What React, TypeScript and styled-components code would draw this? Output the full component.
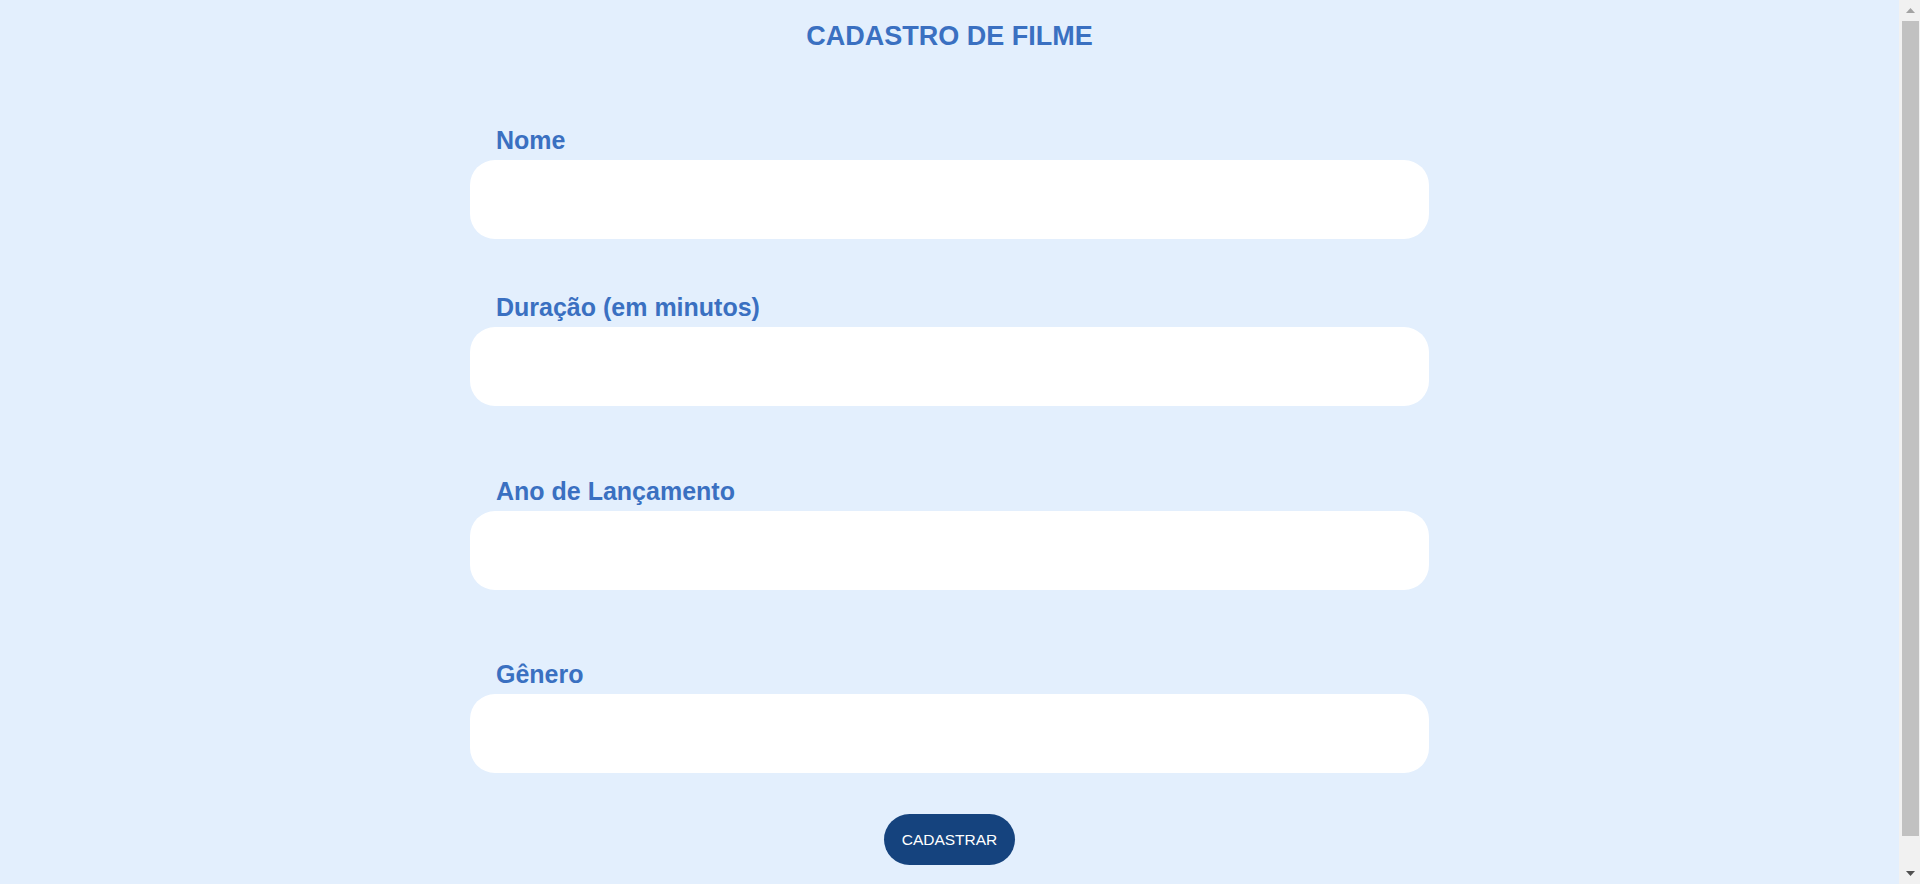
import React from "react";
import styled, { createGlobalStyle } from "styled-components";

const Global = createGlobalStyle`
  html, body {
    margin: 0;
    padding: 0;
    background: #e3effd;
    font-family: "Liberation Sans", Arial, sans-serif;
  }
`;

const Page = styled.main`
  display: flex;
  flex-direction: column;
  align-items: center;
  padding: 21px 21px 51px 0;
`;

const Title = styled.h1`
  margin: 0 0 75px;
  font-size: 27px;
  line-height: 30px;
  font-weight: 700;
  color: #3a70c1;
  text-align: center;
`;

const Form = styled.form`
  display: flex;
  flex-direction: column;
  align-items: center;
  width: 959px;
`;

const Field = styled.div<{ $gap: number }>`
  display: flex;
  flex-direction: column;
  width: 100%;
  margin-bottom: ${(p) => p.$gap}px;
`;

const Label = styled.label`
  display: block;
  padding-left: 26px;
  margin-bottom: 6px;
  font-size: 25px;
  line-height: 28px;
  font-weight: 700;
  color: #3a70c1;
`;

const Input = styled.input`
  box-sizing: border-box;
  width: 100%;
  height: 79px;
  border: none;
  outline: none;
  border-radius: 25px;
  background: #ffffff;
  padding: 0 26px;
  font-family: "Liberation Sans", Arial, sans-serif;
  font-size: 20px;
  color: #333;
`;

const Button = styled.button`
  width: 131px;
  height: 51px;
  border: none;
  border-radius: 26px;
  background: #15437e;
  color: #ffffff;
  font-family: "Liberation Sans", Arial, sans-serif;
  font-size: 15.5px;
  cursor: pointer;
`;

/* imitation of the browser scrollbar seen in the screenshot */
const ScrollTrack = styled.div`
  position: fixed;
  top: 0;
  right: 0;
  width: 21px;
  height: 100vh;
  background: #f1f1f1;
  display: flex;
  flex-direction: column;
  align-items: center;
  box-sizing: border-box;
  padding-left: 2px;
`;

const ArrowBox = styled.div`
  height: 21px;
  width: 100%;
  display: flex;
  align-items: center;
  justify-content: center;
  flex: none;
`;

const Thumb = styled.div`
  flex: 1;
  width: 17px;
  margin: 0 0 0 0;
  background: #c1c1c1;
  margin-bottom: 27px;
`;

const fields = [
  { id: "nome", label: "Nome", gap: 54 },
  { id: "duracao", label: "Duração (em minutos)", gap: 71 },
  { id: "ano", label: "Ano de Lançamento", gap: 70 },
  { id: "genero", label: "Gênero", gap: 41 },
];

export default function App() {
  return (
    <>
      <Global />
      <Page>
        <Title>CADASTRO DE FILME</Title>
        <Form onSubmit={(e) => e.preventDefault()}>
          {fields.map((f) => (
            <Field key={f.id} $gap={f.gap}>
              <Label htmlFor={f.id}>{f.label}</Label>
              <Input id={f.id} type="text" />
            </Field>
          ))}
          <Button type="submit">CADASTRAR</Button>
        </Form>
      </Page>
      <ScrollTrack aria-hidden>
        <ArrowBox>
          <svg width="9" height="5" viewBox="0 0 9 5">
            <polygon points="0,5 9,5 4.5,0" fill="#a3a3a3" />
          </svg>
        </ArrowBox>
        <Thumb />
        <ArrowBox>
          <svg width="9" height="5" viewBox="0 0 9 5">
            <polygon points="0,0 9,0 4.5,5" fill="#505050" />
          </svg>
        </ArrowBox>
      </ScrollTrack>
    </>
  );
}
